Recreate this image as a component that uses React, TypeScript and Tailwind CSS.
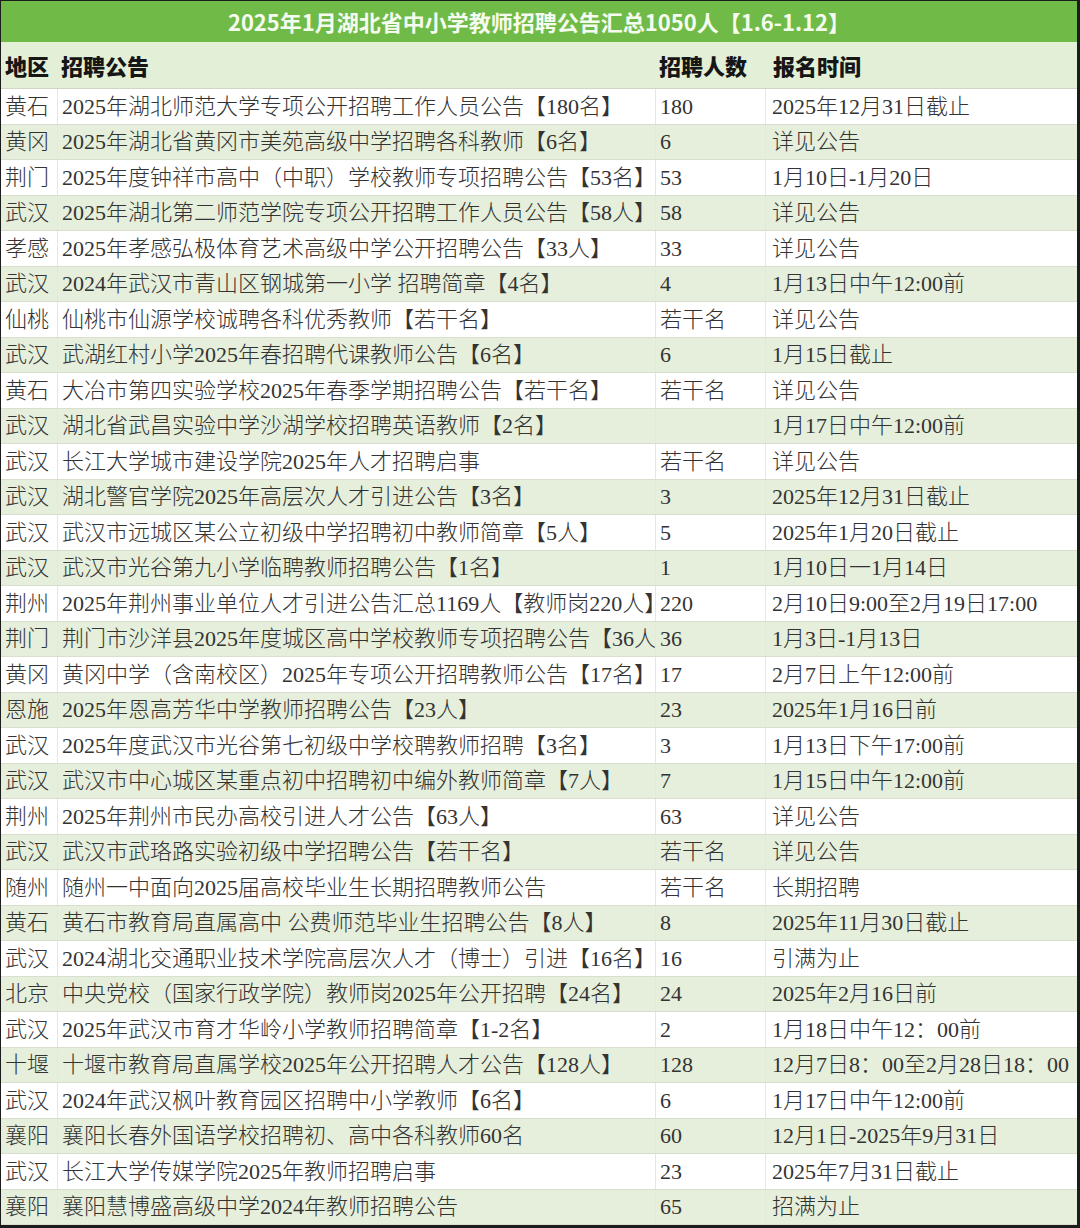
const rows: [string, string, string, string][] = [
  ["黄石", "2025年湖北师范大学专项公开招聘工作人员公告【180名】", "180", "2025年12月31日截止"],
  ["黄冈", "2025年湖北省黄冈市美苑高级中学招聘各科教师【6名】", "6", "详见公告"],
  ["荆门", "2025年度钟祥市高中（中职）学校教师专项招聘公告【53名】", "53", "1月10日-1月20日"],
  ["武汉", "2025年湖北第二师范学院专项公开招聘工作人员公告【58人】", "58", "详见公告"],
  ["孝感", "2025年孝感弘极体育艺术高级中学公开招聘公告【33人】", "33", "详见公告"],
  ["武汉", "2024年武汉市青山区钢城第一小学 招聘简章【4名】", "4", "1月13日中午12:00前"],
  ["仙桃", "仙桃市仙源学校诚聘各科优秀教师【若干名】", "若干名", "详见公告"],
  ["武汉", "武湖红村小学2025年春招聘代课教师公告【6名】", "6", "1月15日截止"],
  ["黄石", "大冶市第四实验学校2025年春季学期招聘公告【若干名】", "若干名", "详见公告"],
  ["武汉", "湖北省武昌实验中学沙湖学校招聘英语教师【2名】", "", "1月17日中午12:00前"],
  ["武汉", "长江大学城市建设学院2025年人才招聘启事", "若干名", "详见公告"],
  ["武汉", "湖北警官学院2025年高层次人才引进公告【3名】", "3", "2025年12月31日截止"],
  ["武汉", "武汉市远城区某公立初级中学招聘初中教师简章【5人】", "5", "2025年1月20日截止"],
  ["武汉", "武汉市光谷第九小学临聘教师招聘公告【1名】", "1", "1月10日一1月14日"],
  ["荆州", "2025年荆州事业单位人才引进公告汇总1169人【教师岗220人】", "220", "2月10日9:00至2月19日17:00"],
  ["荆门", "荆门市沙洋县2025年度城区高中学校教师专项招聘公告【36人】", "36", "1月3日-1月13日"],
  ["黄冈", "黄冈中学（含南校区）2025年专项公开招聘教师公告【17名】", "17", "2月7日上午12:00前"],
  ["恩施", "2025年恩高芳华中学教师招聘公告【23人】", "23", "2025年1月16日前"],
  ["武汉", "2025年度武汉市光谷第七初级中学校聘教师招聘【3名】", "3", "1月13日下午17:00前"],
  ["武汉", "武汉市中心城区某重点初中招聘初中编外教师简章【7人】", "7", "1月15日中午12:00前"],
  ["荆州", "2025年荆州市民办高校引进人才公告【63人】", "63", "详见公告"],
  ["武汉", "武汉市武珞路实验初级中学招聘公告【若干名】", "若干名", "详见公告"],
  ["随州", "随州一中面向2025届高校毕业生长期招聘教师公告", "若干名", "长期招聘"],
  ["黄石", "黄石市教育局直属高中 公费师范毕业生招聘公告【8人】", "8", "2025年11月30日截止"],
  ["武汉", "2024湖北交通职业技术学院高层次人才（博士）引进【16名】", "16", "引满为止"],
  ["北京", "中央党校（国家行政学院）教师岗2025年公开招聘【24名】", "24", "2025年2月16日前"],
  ["武汉", "2025年武汉市育才华岭小学教师招聘简章【1-2名】", "2", "1月18日中午12：00前"],
  ["十堰", "十堰市教育局直属学校2025年公开招聘人才公告【128人】", "128", "12月7日8：00至2月28日18：00"],
  ["武汉", "2024年武汉枫叶教育园区招聘中小学教师【6名】", "6", "1月17日中午12:00前"],
  ["襄阳", "襄阳长春外国语学校招聘初、高中各科教师60名", "60", "12月1日-2025年9月31日"],
  ["武汉", "长江大学传媒学院2025年教师招聘启事", "23", "2025年7月31日截止"],
  ["襄阳", "襄阳慧博盛高级中学2024年教师招聘公告", "65", "招满为止"],
];

const cell = "flex items-center overflow-hidden whitespace-nowrap pl-[4px]";

export default function App() {
  return (
    <div className="flex h-[1228px] w-[1080px] flex-col overflow-hidden border-t border-l border-r-[3px] border-b-[3px] border-[#1c1c1c] bg-white">
      <div className="flex h-[41px] shrink-0 items-center justify-center bg-[#70bb47] text-[22px] font-bold text-[#f6fbef] [font-family:'Noto_Sans_CJK_SC',sans-serif]">
        2025年1月湖北省中小学教师招聘公告汇总1050人【1.6-1.12】
      </div>
      <div className="grid h-[47px] shrink-0 grid-cols-[56px_598px_110px_1fr] border-b border-[#cfd6c6] bg-[#e3efd6] text-[22px] font-black text-[#161616] [font-family:'Noto_Sans_CJK_SC',sans-serif]">
        <div className={cell}>地区</div>
        <div className={cell}>招聘公告</div>
        <div className={cell}>招聘人数</div>
        <div className={`${cell} pl-[8px]`}>报名时间</div>
      </div>
      <div className="flex flex-col text-[22px] font-light text-[#333333] [font-family:'Liberation_Serif','Noto_Sans_CJK_SC',serif]">
        {rows.map(([area, title, count, time], i) => (
          <div
            key={i}
            className={`grid h-[35.5px] shrink-0 grid-cols-[56px_598px_110px_1fr] border-b border-[#d8dfcf] ${i % 2 === 1 ? "bg-[#e5efdb]" : "bg-white"}`}
          >
            <div className={cell}>{area}</div>
            <div className={`${cell} border-l border-[#e4e8de]`}>{title}</div>
            <div className={`${cell} border-l border-[#e4e8de]`}>{count}</div>
            <div className={`${cell} border-l border-[#e4e8de] pl-[6px]`}>{time}</div>
          </div>
        ))}
      </div>
    </div>
  );
}
